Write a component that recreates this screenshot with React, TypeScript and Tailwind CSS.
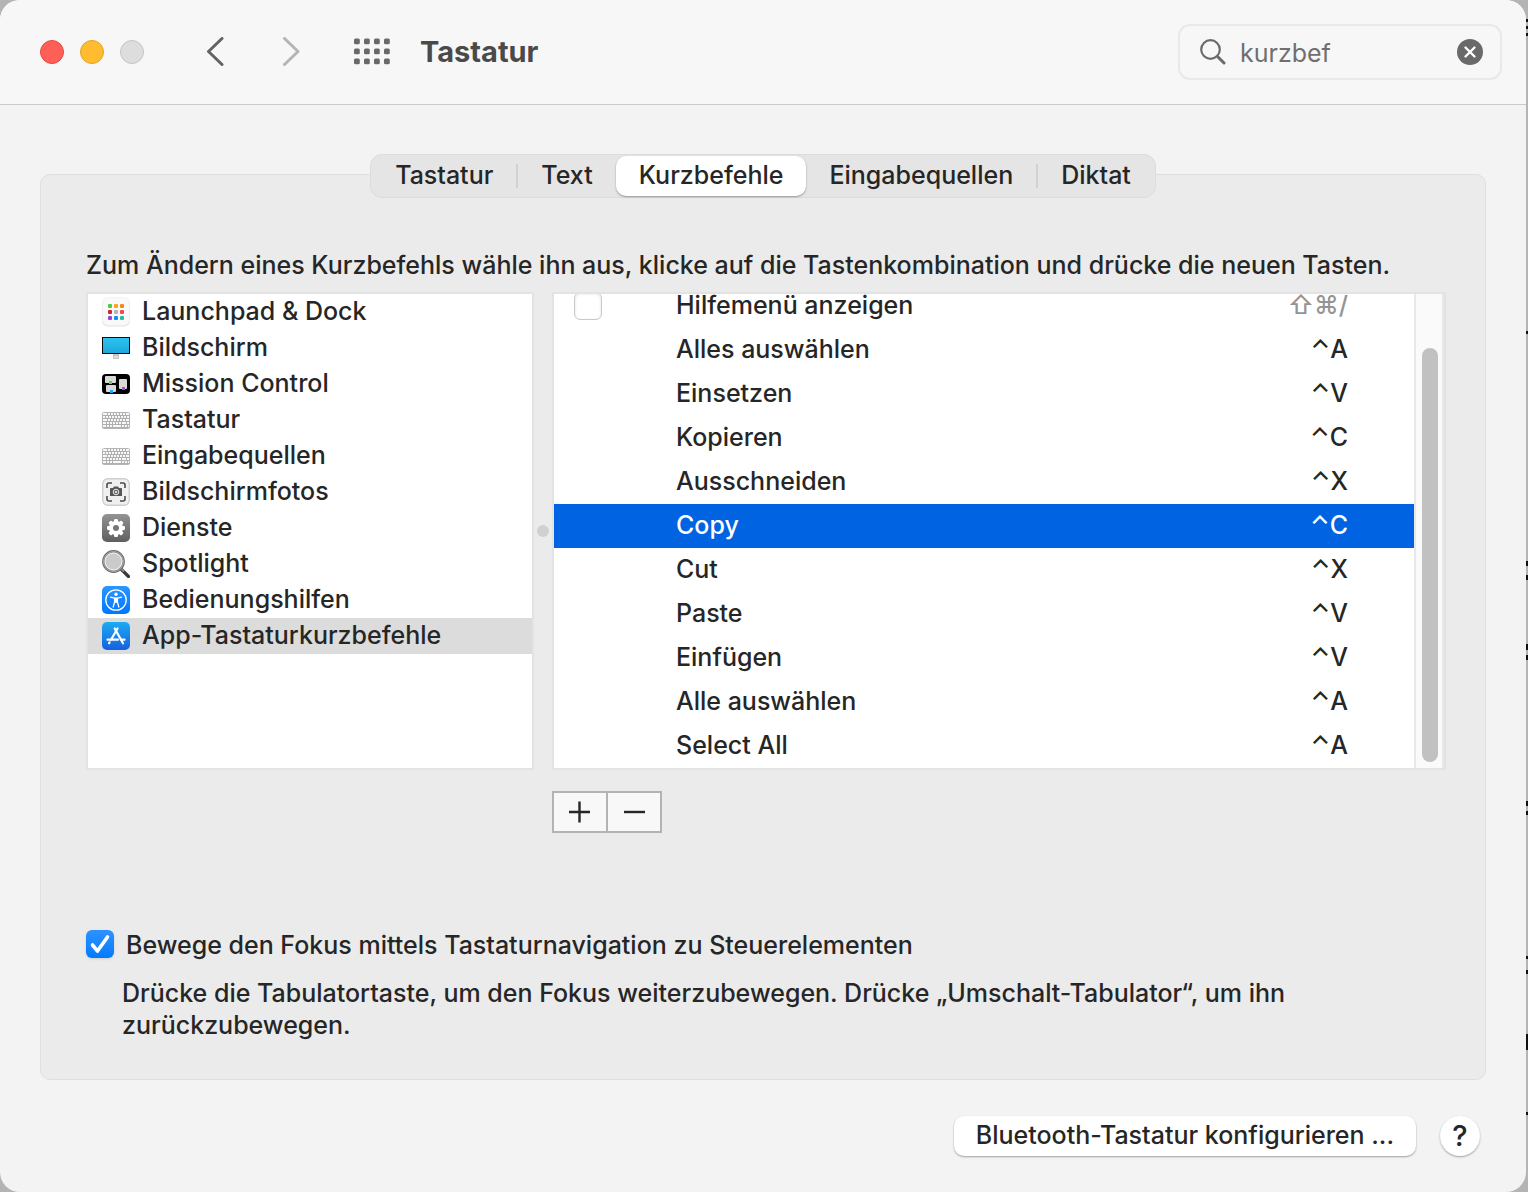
import { useState } from 'react';
import type { ReactNode } from 'react';
import clsx from 'clsx';

type Category = { name: string; icon: ReactNode };
type Shortcut = { id: number; title: string; keys: string; optional?: boolean };

const LaunchpadIcon = () => (
	<svg viewBox="0 0 28 28" className="w-7 h-7 overflow-visible" aria-hidden="true">
		<rect x="0" y="0.5" width="28" height="28" rx="6" fill="#e2e2e4" />
		<rect x="0.3" y="-0.5" width="27.4" height="28" rx="6" fill="#f9f9fa" stroke="#ececee" strokeWidth="0.6" />
		<rect x="6" y="6" width="4" height="4" rx="1" fill="#4cc94a" />
		<rect x="12" y="6" width="4" height="4" rx="1" fill="#f7a51c" />
		<rect x="18" y="6" width="4" height="4" rx="1" fill="#f58a12" />
		<rect x="6" y="12" width="4" height="4" rx="1" fill="#d8232a" />
		<rect x="12" y="12" width="4" height="4" rx="1" fill="#b4b4b8" />
		<rect x="18" y="12" width="4" height="4" rx="1" fill="#f8484b" />
		<rect x="6" y="18" width="4" height="4" rx="1" fill="#9b45d6" />
		<rect x="12" y="18" width="4" height="4" rx="1" fill="#1590ea" />
		<rect x="18" y="18" width="4" height="4" rx="1" fill="#25bfa0" />
	</svg>
);

const DisplayIcon = () => (
	<svg viewBox="0 0 28 28" className="w-7 h-7" aria-hidden="true">
		<defs>
			<linearGradient id="screen" x1="0" y1="0" x2="0" y2="1">
				<stop offset="0" stopColor="#2dc4f2" />
				<stop offset="1" stopColor="#1fa6da" />
			</linearGradient>
		</defs>
		<rect x="11" y="20" width="6" height="5" fill="#c4c4c4" />
		<rect x="12" y="22" width="4" height="2" fill="#dedede" />
		<rect x="0.5" y="3.5" width="27" height="16" fill="url(#screen)" stroke="#0b0b0b" />
	</svg>
);

const MissionControlIcon = () => (
	<svg viewBox="0 0 28 28" className="w-7 h-7" aria-hidden="true">
		<rect x="0" y="4" width="28" height="20" rx="4" fill="#000" />
		<rect x="3" y="6" width="11" height="7" rx="1" fill="#d9d9d9" />
		<rect x="4" y="15" width="10" height="7" rx="1" fill="#d9d9d9" />
		<rect x="17" y="9" width="8" height="10" rx="1" fill="#d9d9d9" />
		<rect x="7" y="11" width="3" height="3" fill="#52dd45" />
		<rect x="8" y="20" width="3" height="3" fill="#1ba8f5" />
		<rect x="20" y="17" width="3" height="3" fill="#a44fe0" />
	</svg>
);

const KeyboardIcon = () => (
	<svg viewBox="0 0 28 28" className="w-7 h-7" aria-hidden="true">
		<rect x="0.5" y="6.5" width="27" height="16" rx="1" fill="#f8f8f8" stroke="#b4b4b4" />
		<g stroke="#a6a6a6" strokeWidth="0.9">
			<path d="M1 9.5h26M1 12.5h26M1 15.5h26M1 18.5h26M1 21.5h26" />
			<path d="M5.5 7v2M8.5 7v2M11.5 7v2M14.5 7v2M17.5 7v2M20.5 7v2M23.5 7v2" />
			<path d="M3.5 10v2M6.5 10v2M9.5 10v2M12.5 10v2M15.5 10v2M18.5 10v2M21.5 10v2M24.5 10v2" />
			<path d="M5.5 13v2M8.5 13v2M11.5 13v2M14.5 13v2M17.5 13v2M20.5 13v2M23.5 13v2" />
			<path d="M4.5 16v2M7.5 16v2M10.5 16v2M13.5 16v2M16.5 16v2M19.5 16v2M24.5 16v2" />
			<path d="M4.5 19v2M7.5 19v2M10.5 19v2M19.5 19v2M22.5 19v2M25.5 19v2" />
		</g>
	</svg>
);

const ScreenshotIcon = () => (
	<svg viewBox="0 0 28 28" className="w-7 h-7" aria-hidden="true">
		<rect x="0.7" y="0.7" width="26.6" height="26.6" rx="5" fill="#efefef" stroke="#cfcfcf" strokeWidth="1.4" />
		<path
			d="M5 10V7q0-2 2-2h3M18 5h3q2 0 2 2v3M23 18v3q0 2-2 2h-3M10 23H7q-2 0-2-2v-3"
			fill="none"
			stroke="#4b4b4b"
			strokeWidth="1.6"
		/>
		<path d="M9 10h2l1-1.500h4l1 1.500h2q1 0 1 1v7H8v-7q0-1 1-1z" fill="#555" />
		<circle cx="14" cy="14" r="2.800" fill="#555" stroke="#eee" strokeWidth="1" />
		<circle cx="14" cy="14" r="1.300" fill="#ddd" />
	</svg>
);

const GearIcon = () => (
	<svg viewBox="0 0 28 28" className="w-7 h-7" aria-hidden="true">
		<defs>
			<linearGradient id="gear" x1="0" y1="0" x2="0" y2="1">
				<stop offset="0" stopColor="#939393" />
				<stop offset="1" stopColor="#5f5f5f" />
			</linearGradient>
		</defs>
		<rect width="28" height="28" rx="5" fill="url(#gear)" />
		<g fill="#fff">
			<circle cx="14" cy="14" r="7" />
			{[0, 45, 90, 135].map((deg) => (
				<rect key={deg} x="12" y="5" width="4" height="18" rx="1.2" transform={`rotate(${deg} 14 14)`} />
			))}
		</g>
		<circle cx="14" cy="14" r="3" fill="#777" />
	</svg>
);

const SpotlightIcon = () => (
	<svg viewBox="0 0 28 28" className="w-7 h-7" aria-hidden="true">
		<path d="M19 19l7.500 7.500" stroke="#3a3a3a" strokeWidth="3.200" strokeLinecap="round" />
		<path d="M19 18.500l3 3" stroke="#8c8c8c" strokeWidth="2" />
		<circle cx="11.500" cy="11.500" r="10.300" fill="#d5d5d5" stroke="#6b6b6b" strokeWidth="2.200" />
		<circle cx="11.500" cy="11.500" r="10" fill="none" stroke="#c9c9c9" strokeWidth="0.7" />
		<circle cx="11.500" cy="11.500" r="8.300" fill="#cacaca" stroke="#ededed" strokeWidth="1" />
	</svg>
);

const AccessibilityIcon = () => (
	<svg viewBox="0 0 28 28" className="w-7 h-7" aria-hidden="true">
		<defs>
			<linearGradient id="access" x1="0" y1="0" x2="0" y2="1">
				<stop offset="0" stopColor="#2b96ff" />
				<stop offset="1" stopColor="#0077ff" />
			</linearGradient>
		</defs>
		<rect width="28" height="28" rx="5" fill="url(#access)" />
		<circle cx="14" cy="14" r="10.200" fill="none" stroke="#fff" strokeWidth="1.300" />
		<circle cx="14" cy="8.300" r="1.700" fill="#fff" />
		<path
			d="M8.500 11.200l4 .9h3l4-.9M12.600 12v4l-1.400 5M15.400 12v4l1.400 5"
			fill="none"
			stroke="#fff"
			strokeWidth="1.300"
			strokeLinecap="round"
		/>
		<path d="M12.500 11.800h3v5h-3z" fill="#fff" />
	</svg>
);

const AppStoreIcon = () => (
	<svg viewBox="0 0 28 28" className="w-7 h-7" aria-hidden="true">
		<defs>
			<linearGradient id="store" x1="0" y1="0" x2="0" y2="1">
				<stop offset="0" stopColor="#1eabf3" />
				<stop offset="1" stopColor="#1660de" />
			</linearGradient>
		</defs>
		<rect width="28" height="28" rx="5" fill="url(#store)" />
		<g fill="none" stroke="#fff" strokeWidth="2.200" strokeLinecap="round">
			<path d="M15.500 6.500L9.200 17.500" />
			<path d="M12.700 6.500l8.300 14.800" />
			<path d="M5.500 17.700h10.500M19.500 17.700h3" />
			<path d="M7.600 20.300l-.5.900" />
		</g>
	</svg>
);

const categories: Category[] = [
	{ name: 'Launchpad & Dock', icon: <LaunchpadIcon /> },
	{ name: 'Bildschirm', icon: <DisplayIcon /> },
	{ name: 'Mission Control', icon: <MissionControlIcon /> },
	{ name: 'Tastatur', icon: <KeyboardIcon /> },
	{ name: 'Eingabequellen', icon: <KeyboardIcon /> },
	{ name: 'Bildschirmfotos', icon: <ScreenshotIcon /> },
	{ name: 'Dienste', icon: <GearIcon /> },
	{ name: 'Spotlight', icon: <SpotlightIcon /> },
	{ name: 'Bedienungshilfen', icon: <AccessibilityIcon /> },
	{ name: 'App-Tastaturkurzbefehle', icon: <AppStoreIcon /> },
];

const shortcuts: Shortcut[] = [
	{ id: 1, title: 'Hilfemenü anzeigen', keys: '⇧⌘/', optional: true },
	{ id: 2, title: 'Alles auswählen', keys: '⌃A' },
	{ id: 3, title: 'Einsetzen', keys: '⌃V' },
	{ id: 4, title: 'Kopieren', keys: '⌃C' },
	{ id: 5, title: 'Ausschneiden', keys: '⌃X' },
	{ id: 6, title: 'Copy', keys: '⌃C' },
	{ id: 7, title: 'Cut', keys: '⌃X' },
	{ id: 8, title: 'Paste', keys: '⌃V' },
	{ id: 9, title: 'Einfügen', keys: '⌃V' },
	{ id: 10, title: 'Alle auswählen', keys: '⌃A' },
	{ id: 11, title: 'Select All', keys: '⌃A' },
];

const tabs = ['Tastatur', 'Text', 'Kurzbefehle', 'Eingabequellen', 'Diktat'];

const Toolbar = () => {
	const [query, setQuery] = useState('kurzbef');

	return (
		<header className="flex items-center h-[105px] pl-10 pr-6 bg-[#f7f7f7] border-b border-[#cbcbcb]">
			<div className="flex gap-4">
				<button aria-label="Schließen" className="w-6 h-6 rounded-full bg-[#ff5f57] border border-[#e24b41]" />
				<button aria-label="Minimieren" className="w-6 h-6 rounded-full bg-[#febc2e] border border-[#e1a325]" />
				<button aria-label="Zoomen" disabled className="w-6 h-6 rounded-full bg-[#dddddd] border border-[#c5c5c5]" />
			</div>
			<nav className="flex items-center ml-[61px]">
				<button aria-label="Zurück">
					<svg width="20" height="30" viewBox="0 0 20 30" fill="none" stroke="#636363" strokeWidth="3" strokeLinecap="round" strokeLinejoin="round">
						<path d="M17 1.500L3.500 14.500 17 27.500" />
					</svg>
				</button>
				<button aria-label="Vorwärts" disabled className="ml-14">
					<svg width="20" height="30" viewBox="0 0 20 30" fill="none" stroke="#b5b5b5" strokeWidth="3" strokeLinecap="round" strokeLinejoin="round">
						<path d="M3.500 1.500l13.500 13L3.500 27.500" />
					</svg>
				</button>
				<button aria-label="Alle einblenden" className="ml-[53px]">
					<svg width="36" height="28" viewBox="0 0 36 28" fill="#696969">
						{[0, 10, 20].map((y) =>
							[0, 10, 20, 30].map((x) => <rect key={`${x}-${y}`} x={x} y={y + 0.5} width="5.800" height="5.800" rx="1.500" />)
						)}
					</svg>
				</button>
			</nav>
			<h1 className="ml-[30px] text-[29px] leading-9 font-bold text-[#4a4a4a]">Tastatur</h1>
			<div className="flex items-center w-[324px] h-14 ml-auto pl-5 pr-[17px] border-2 border-[#e9e9e9] rounded-xl">
				<svg width="26" height="26" viewBox="0 0 26 26" fill="none" stroke="#6b6b6b" strokeWidth="2.200" strokeLinecap="round" className="shrink-0">
					<circle cx="10.500" cy="10.500" r="9.300" />
					<path d="M17.500 17.500l6.500 6.500" strokeWidth="3" />
				</svg>
				<input
					type="text"
					aria-label="Suchen"
					value={query}
					onChange={(e) => setQuery(e.target.value)}
					className="flex-1 min-w-0 ml-3.5 pt-0.5 bg-transparent outline-none font-normal text-[#6f6f6f]"
				/>
				<button aria-label="Suche löschen" onClick={() => setQuery('')}>
					<svg width="26" height="26" viewBox="0 0 26 26">
						<circle cx="13" cy="13" r="13" fill="#6a6a6a" />
						<path d="M8.500 8.500l9 9M17.500 8.500l-9 9" stroke="#fff" strokeWidth="2.400" strokeLinecap="round" />
					</svg>
				</button>
			</div>
		</header>
	);
};

const TabBar = () => {
	const [active, setActive] = useState(2);

	return (
		<div role="tablist" className="relative z-10 flex w-max mx-auto h-11 -mb-6 p-px rounded-xl bg-[#e5e5e5] border border-[#dcdcdc]">
			{tabs.map((tab, i) => (
				<div key={tab} className="flex items-center">
					{i > 0 && active !== i && active !== i - 1 && <span className="w-0.5 h-6 bg-[#d2d2d2]" />}
					<button
						role="tab"
						aria-selected={active === i}
						onClick={() => setActive(i)}
						className={clsx(
							'h-10 px-[23px] pb-0.5 rounded-[10px]',
							active === i && 'bg-white shadow-[0_1px_2px_rgba(0,0,0,0.35)]'
						)}
					>
						{tab}
					</button>
				</div>
			))}
		</div>
	);
};

const CategoryList = () => {
	const [selected, setSelected] = useState('App-Tastaturkurzbefehle');

	return (
		<ul className="w-[448px] shrink-0 bg-white border-2 border-[#e3e3e3]">
			{categories.map(({ name, icon }) => (
				<li key={name}>
					<button
						onClick={() => setSelected(name)}
						className={clsx('flex items-center gap-3 w-full h-9 pl-3.5', selected === name && 'bg-[#dcdcdc]')}
					>
						{icon}
						<span className="pb-0.5">{name}</span>
					</button>
				</li>
			))}
		</ul>
	);
};

const ShortcutList = () => {
	const [selected, setSelected] = useState(6);

	return (
		<div className="flex flex-1 bg-white border-2 border-[#e3e3e3]">
			<div className="flex flex-1 flex-col justify-end overflow-hidden">
				<table className="w-full shrink-0 leading-5">
					<tbody>
						{shortcuts.map(({ id, title, keys, optional }) => (
							<tr
								key={id}
								onClick={() => setSelected(id)}
								className={clsx('h-11', selected === id && 'bg-[#0063e1] text-white')}
							>
								<td className="w-[122px] p-0 pl-5">
									{optional && (
										<input
											type="checkbox"
											aria-label={title}
											className="block appearance-none w-7 h-7 rounded-md bg-white border border-[#c9c9c9] shadow-[inset_0_1px_3px_rgba(0,0,0,0.12)]"
										/>
									)}
								</td>
								<td className="p-0 pb-0.5">{title}</td>
								<td className={clsx('p-0 pb-0.5 pr-[66px] text-right', optional && 'text-[#949494]')}>{keys}</td>
							</tr>
						))}
					</tbody>
				</table>
			</div>
			<div className="flex w-[30px] pt-[54px] pb-1.5 pl-1.5 bg-[#fafafa] border-x-2 border-[#e8e8e8]">
				<div className="w-4 rounded-full bg-[#c1c1c1]" />
			</div>
		</div>
	);
};

// slivers of the document window that show past the right edge
const Backdrop = () => (
	<svg width="2" height="1192" className="absolute top-0 right-0" aria-hidden="true">
		<path
			d="M1 19v3M1 26v3M1 33v3M1 331v3M1 561v5M1 575v5M1 644v6M1 655v5M1 801v5M1 811v4M1 956v3M1 970v4M1 1034v16M1 1112v3"
			stroke="#111"
			strokeWidth="2"
		/>
	</svg>
);

const App = () => {
	const [focusNav, setFocusNav] = useState(true);

	return (
		<div className="relative min-h-screen pr-0.5 bg-[#b4b4b4] font-['Inter','Liberation_Sans',sans-serif] text-[25px] leading-8 text-[#262626]">
			<Backdrop />
			<div className="relative min-h-screen rounded-[20px] overflow-hidden bg-[#f3f3f3] font-[450]">
				<Toolbar />
				<main className="px-10 pt-[49px]">
					<TabBar />
					<section className="pt-[74px] pb-[38px] pl-[45px] pr-[39px] rounded-[10px] bg-[#ebebeb] border border-[#dfdfdf]">
						<p className="mb-[11px]">
							Zum Ändern eines Kurzbefehls wähle ihn aus, klicke auf die Tastenkombination und drücke die neuen Tasten.
						</p>
						<div className="flex h-[478px]">
							<CategoryList />
							<div className="flex items-center justify-center w-[18px]">
								<span className="w-3 h-3 rounded-full bg-[#d0d0d0]" />
							</div>
							<ShortcutList />
						</div>
						<div className="flex w-max h-[42px] mt-[21px] ml-[466px] border-2 border-[#b3b3b3] bg-[#f8f8f8]">
							<button aria-label="Hinzufügen" className="flex items-center justify-center w-[54px] border-r-2 border-[#b3b3b3]">
								<svg width="22" height="22" viewBox="0 0 22 22" stroke="#262626" strokeWidth="2.400">
									<path d="M10.500 0.500v21M0 11h21" />
								</svg>
							</button>
							<button aria-label="Entfernen" className="flex items-center justify-center w-[52px]">
								<svg width="22" height="22" viewBox="0 0 22 22" stroke="#262626" strokeWidth="2.400">
									<path d="M1 11h21" />
								</svg>
							</button>
						</div>
						<label className="flex items-center gap-3 h-7 mt-[97px]">
							<span className="relative w-7 h-7">
								<input
									type="checkbox"
									checked={focusNav}
									onChange={(e) => setFocusNav(e.target.checked)}
									className="block appearance-none w-7 h-7 rounded-md bg-white checked:bg-linear-to-b checked:from-[#2b93ff] checked:to-[#007aff] shadow-sm"
								/>
								{focusNav && (
									<svg viewBox="0 0 28 28" className="absolute inset-0 pointer-events-none" fill="none" stroke="#fff" strokeWidth="3.600" strokeLinecap="round" strokeLinejoin="round">
										<path d="M6.500 15l5 6L21.500 7" />
									</svg>
								)}
							</span>
							<span className="pt-0.5">Bewege den Fokus mittels Tastaturnavigation zu Steuerelementen</span>
						</label>
						<p className="max-w-[1240px] mt-[19px] ml-9">
							Drücke die Tabulatortaste, um den Fokus weiterzubewegen. Drücke „Umschalt-Tabulator“, um ihn zurückzubewegen.
						</p>
					</section>
				</main>
				<footer className="flex justify-end gap-6 pt-9 pb-9 pr-[46px]">
					<button className="h-10 px-[22px] pb-0.5 rounded-[10px] bg-white shadow-[0_1px_2px_rgba(0,0,0,0.35)]">
						Bluetooth-Tastatur konfigurieren ...
					</button>
					<button aria-label="Hilfe" className="w-10 h-10 rounded-full bg-white text-[29px] font-medium shadow-[0_1px_2px_rgba(0,0,0,0.35)]">
						?
					</button>
				</footer>
			</div>
		</div>
	);
};

export default App;
